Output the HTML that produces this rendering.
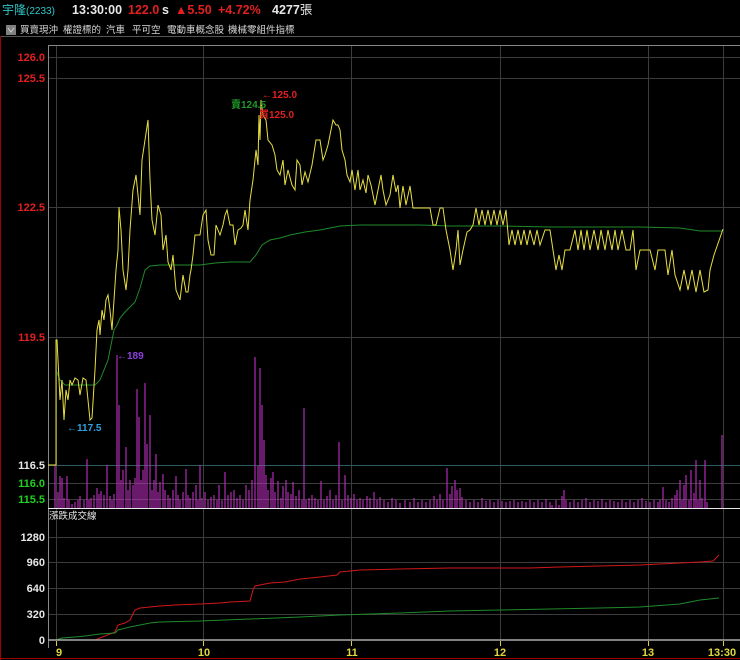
<!DOCTYPE html>
<html><head><meta charset="utf-8"><style>
html,body{margin:0;padding:0;background:#000;width:740px;height:660px;overflow:hidden}
svg{display:block}
text{font-family:"Liberation Sans","Noto Sans CJK TC",sans-serif}
</style></head><body>
<svg width="740" height="660" viewBox="0 0 740 660" xmlns="http://www.w3.org/2000/svg">
<rect width="740" height="660" fill="#000"/>
<!-- header -->
<text x="2" y="14" font-size="12" fill="#2fc6c6">宇隆<tspan font-size="10">(2233)</tspan></text>
<text x="72" y="14" font-size="12.5" font-weight="bold" fill="#e8e8e8">13:30:00</text>
<text x="128" y="14" font-size="12.5" font-weight="bold" fill="#e02020">122.0</text>
<text x="162" y="14" font-size="12.5" font-weight="bold" fill="#e8e8e8">s</text>
<text x="175" y="14" font-size="12.5" font-weight="bold" fill="#e02020">▲5.50</text>
<text x="218" y="14" font-size="12.5" font-weight="bold" fill="#e02020">+4.72%</text>
<text x="272" y="14" font-size="12.5" font-weight="bold" fill="#e8e8e8">4277<tspan font-weight="normal">張</tspan></text>
<rect x="6" y="25" width="10" height="10" fill="#808080"/>
<path d="M8 28 L11 32 L14 28" stroke="#ccc" fill="none"/>
<g font-size="9.5" fill="#d8d8d8">
<text x="20" y="33">買賣現沖</text>
<text x="63" y="33">權證標的</text>
<text x="106" y="33">汽車</text>
<text x="132" y="33">平可空</text>
<text x="167" y="33">電動車概念股</text>
<text x="228" y="33">機械零組件指標</text>
</g>
<line x1="0" y1="36.5" x2="740" y2="36.5" stroke="#555"/>
<line x1="0.5" y1="36" x2="0.5" y2="660" stroke="#a00000"/>
<line x1="0" y1="658.5" x2="740" y2="658.5" stroke="#a00000"/>
<!-- frame -->
<line x1="48" y1="45.5" x2="740" y2="45.5" stroke="#888"/>
<line x1="48.5" y1="45" x2="48.5" y2="648" stroke="#888"/>
<!-- grid main -->
<g stroke="#3c3c3c" stroke-width="1">
<line x1="49" y1="57.5" x2="740" y2="57.5"/>
<line x1="49" y1="78.5" x2="740" y2="78.5"/>
<line x1="49" y1="207.5" x2="740" y2="207.5"/>
<line x1="49" y1="337.5" x2="740" y2="337.5"/>
<line x1="49" y1="483.5" x2="740" y2="483.5"/>
<line x1="49" y1="499.5" x2="740" y2="499.5"/>
<line x1="56.5" y1="46" x2="56.5" y2="640"/>
<line x1="203.5" y1="46" x2="203.5" y2="640"/>
<line x1="351.5" y1="46" x2="351.5" y2="640"/>
<line x1="500.5" y1="46" x2="500.5" y2="640"/>
<line x1="648.5" y1="46" x2="648.5" y2="640"/>
<line x1="723.5" y1="46" x2="723.5" y2="640"/>
<line x1="49" y1="537.5" x2="740" y2="537.5"/>
<line x1="49" y1="562.5" x2="740" y2="562.5"/>
<line x1="49" y1="588.5" x2="740" y2="588.5"/>
<line x1="49" y1="614.5" x2="740" y2="614.5"/>
</g>
<line x1="49" y1="465.5" x2="740" y2="465.5" stroke="#2d5a60"/>
<!-- labels -->
<g font-size="11" font-weight="bold" text-anchor="end">
<text x="45" y="61" fill="#e02020">126.0</text>
<text x="45" y="82" fill="#e02020">125.5</text>
<text x="45" y="211" fill="#e02020">122.5</text>
<text x="45" y="341" fill="#e02020">119.5</text>
<text x="45" y="469" fill="#e8e8e8">116.5</text>
<text x="45" y="487" fill="#20d020">116.0</text>
<text x="45" y="503" fill="#20d020">115.5</text>
<text x="45" y="541" fill="#e8e8e8">1280</text>
<text x="45" y="566" fill="#e8e8e8">960</text>
<text x="45" y="592" fill="#e8e8e8">640</text>
<text x="45" y="618" fill="#e8e8e8">320</text>
<text x="45" y="644" fill="#e8e8e8">0</text>
</g>
<!-- volume bars -->
<path stroke="#c030c0" stroke-width="1.1" fill="none" d="
M55,508V465 M58,508V492 M60,508V476 M62,508V478 M64,508V498 M67,508V476 M69,508V500 M72,508V504 M75,508V502 M78,508V500 M80,508V496 M84,508V500 M87,508V459 M89,508V500 M91,508V498 M94,508V495 M97,508V488 M99,508V494 M101,508V491 M104,508V495 M107,508V465 M110,508V496 M112,508V500 M114,508V494 M117,508V355 M119,508V405 M121,508V480 M123,508V470 M126,508V447 M128,508V490 M130,508V480 M133,508V485 M135,508V478 M137,508V389 M139,508V417 M141,508V480 M143,508V470 M145,508V383 M147,508V444 M150,508V415 M152,508V490 M154,508V480 M156,508V454 M158,508V492 M160,508V482 M163,508V474 M165,508V490 M168,508V495 M170,508V498 M173,508V490 M176,508V476 M178,508V495 M180,508V500 M183,508V492 M186,508V469 M188,508V495 M190,508V498 M193,508V492 M196,508V485 M198,508V500 M200,508V465 M202,508V498 M205,508V492 M208,508V500 M211,508V497 M214,508V495 M217,508V500 M219,508V485 M222,508V500 M225,508V472 M228,508V495 M231,508V492 M234,508V490 M237,508V498 M240,508V495 M243,508V500 M246,508V485 M249,508V490 M252,508V480 M255,508V357 M258,508V466 M260,508V368 M262,508V405 M264,508V440 M266,508V475 M268,508V490 M271,508V478 M273,508V472 M275,508V492 M278,508V481 M281,508V498 M283,508V486 M286,508V480 M288,508V492 M291,508V494 M293,508V482 M296,508V496 M299,508V490 M302,508V500 M304,508V408 M306,508V500 M309,508V498 M312,508V495 M315,508V498 M318,508V500 M321,508V481 M324,508V500 M327,508V496 M330,508V490 M333,508V500 M336,508V495 M339,508V442 M342,508V500 M345,508V475 M348,508V495 M351,508V498 M354,508V494 M357,508V500 M360,508V498 M363,508V500 M367,508V496 M370,508V498 M374,508V492 M377,508V500 M380,508V497 M384,508V500 M388,508V502 M392,508V498 M396,508V500 M400,508V503 M405,508V500 M410,508V502 M414,508V498 M418,508V502 M422,508V500 M426,508V502 M430,508V500 M434,508V496 M437,508V500 M440,508V494 M443,508V500 M447,508V468 M450,508V494 M452,508V486 M455,508V480 M457,508V490 M460,508V488 M462,508V497 M466,508V500 M470,508V502 M474,508V500 M478,508V502 M482,508V498 M486,508V501 M490,508V500 M494,508V502 M498,508V500 M502,508V501 M506,508V502 M510,508V501 M514,508V500 M518,508V502 M522,508V501 M526,508V502 M530,508V500 M534,508V502 M538,508V500 M542,508V502 M546,508V499 M550,508V502 M552,508V505 M556,508V500 M559,508V505 M562,508V496 M564,508V490 M566,508V500 M570,508V502 M574,508V500 M578,508V502 M582,508V500 M586,508V498 M590,508V502 M594,508V500 M598,508V501 M602,508V499 M606,508V502 M610,508V500 M614,508V501 M618,508V502 M622,508V500 M626,508V502 M630,508V500 M634,508V502 M638,508V500 M642,508V498 M646,508V501 M650,508V502 M654,508V500 M658,508V502 M660,508V500 M663,508V487 M666,508V500 M669,508V502 M672,508V498 M675,508V495 M677,508V490 M680,508V480 M682,508V500 M684,508V485 M686,508V475 M689,508V500 M691,508V470 M694,508V493 M696,508V460 M698,508V500 M700,508V480 M702,508V498 M705,508V460 M707,508V502 M722,508V435"/>
<line x1="48" y1="508.5" x2="740" y2="508.5" stroke="#e8e8e8"/>
<!-- avg line -->
<polyline fill="none" stroke="#1f8a2a" stroke-width="1" points="56,370 60,380 65,385 75,385 90,385 95,385 100,380 108,360 114,330 117,325 120,318 125,312 135,302 140,288 145,270 150,266 160,265 185,265 200,265 215,263 230,262 250,262 256,255 262,245 270,240 280,238 290,235 305,232 320,230 340,226 360,225 420,225 450,226 500,226 550,227 600,227 640,227 680,228 700,231 723,231"/>
<!-- price line -->
<polyline fill="none" stroke="#e8e040" stroke-width="1" points="48,465 56,465 56,340 57,340 58,360 60,400 62,380 64,420 66,390 68,400 70,380 72,385 75,378 78,380 80,395 83,378 86,380 88,400 90,420 92,418 95,370 97,330 99,320 100,335 102,310 104,320 106,300 108,295 110,310 112,330 114,300 116,270 118,250 119,207 121,230 123,270 126,290 128,270 130,230 133,190 136,175 138,195 140,215 142,160 148,120 150,180 152,220 155,235 158,205 161,215 163,250 166,235 168,262 171,270 173,255 176,290 180,300 183,275 186,292 188,292 190,275 191,270 193,255 195,235 200,235 203,215 206,210 208,240 211,255 214,255 216,225 218,230 220,235 223,225 225,215 227,210 230,225 233,225 235,245 238,230 241,228 243,225 245,210 248,230 250,200 253,180 256,150 258,165 259,115 260,140 261,100 263,115 266,120 268,140 272,145 275,155 277,170 280,175 283,160 285,185 288,170 292,185 295,190 297,160 300,165 302,185 305,172 308,182 312,165 316,140 320,140 323,160 325,155 328,145 330,135 333,120 336,125 338,125 340,130 342,150 345,160 347,175 350,182 352,170 355,190 358,170 360,190 363,180 366,193 368,175 371,185 375,205 378,190 381,175 383,190 386,205 390,195 393,175 396,192 398,185 400,208 403,186 406,205 410,186 413,208 430,208 433,225 436,225 440,208 443,208 446,230 450,250 453,270 456,250 458,230 460,265 463,250 467,232 470,230 473,225 476,208 479,225 482,210 485,225 488,210 491,225 494,210 497,225 500,210 503,225 506,210 509,245 512,230 515,245 518,230 521,245 524,230 527,245 530,230 534,245 537,230 540,245 545,230 550,230 553,250 556,270 559,255 562,270 565,250 570,250 575,230 578,250 581,230 584,250 587,230 590,250 594,230 598,250 601,230 605,250 608,230 612,250 615,230 618,250 622,230 626,250 630,250 633,230 636,270 640,250 650,250 655,270 658,250 665,250 668,275 672,250 675,275 680,290 684,270 688,290 692,270 696,292 700,270 704,292 708,290 710,270 714,255 723,229"/>
<!-- annotations -->
<text x="262" y="98" font-size="10" font-weight="bold" fill="#e02020">←125.0</text>
<text x="231" y="108" font-size="10" font-weight="bold" fill="#1f9a2a">賣124.5</text>
<text x="259" y="118" font-size="10" font-weight="bold" fill="#e02020">買125.0</text>
<text x="67" y="431" font-size="10" font-weight="bold" fill="#30a0e0">←117.5</text>
<text x="117" y="359" font-size="10" font-weight="bold" fill="#9040e0">←189</text>
<!-- lower panel -->
<text x="49" y="519" font-size="9.5" fill="#e8e8e8">漲跌成交線</text>
<polyline fill="none" stroke="#d01818" stroke-width="1" points="56,640 95,640 115,632 118,625 125,623 130,620 135,610 140,608 150,607 160,606 175,605 200,604 220,603 230,602 250,601 253,590 255,586 270,583 285,582 300,579 320,577 337,575 340,572 360,570 400,569 450,568 530,568 560,567 600,566 640,565 680,563 700,562 713,561 719,555"/>
<polyline fill="none" stroke="#1f8a2a" stroke-width="1" points="56,640 62,638 75,637 85,636 100,634 115,633 118,630 130,627 140,625 150,623 160,622 200,621 250,619 300,617 340,615 400,613 450,611 500,610 550,609 600,608 640,607 680,604 700,600 719,598"/>
<line x1="48" y1="640" x2="740" y2="640" stroke="#aaa" stroke-width="1.5"/>
<g stroke="#d8d040"><line x1="56.5" y1="641" x2="56.5" y2="646"/><line x1="203.5" y1="641" x2="203.5" y2="646"/><line x1="351.5" y1="641" x2="351.5" y2="646"/><line x1="500.5" y1="641" x2="500.5" y2="646"/><line x1="648.5" y1="641" x2="648.5" y2="646"/><line x1="723.5" y1="641" x2="723.5" y2="646"/></g>
<g font-size="11" font-weight="bold" fill="#e0d840" text-anchor="middle">
<text x="59" y="656">9</text><text x="204" y="656">10</text><text x="352" y="656">11</text><text x="500" y="656">12</text><text x="648" y="656">13</text><text x="722" y="656">13:30</text>
</g>
</svg>
</body></html>
